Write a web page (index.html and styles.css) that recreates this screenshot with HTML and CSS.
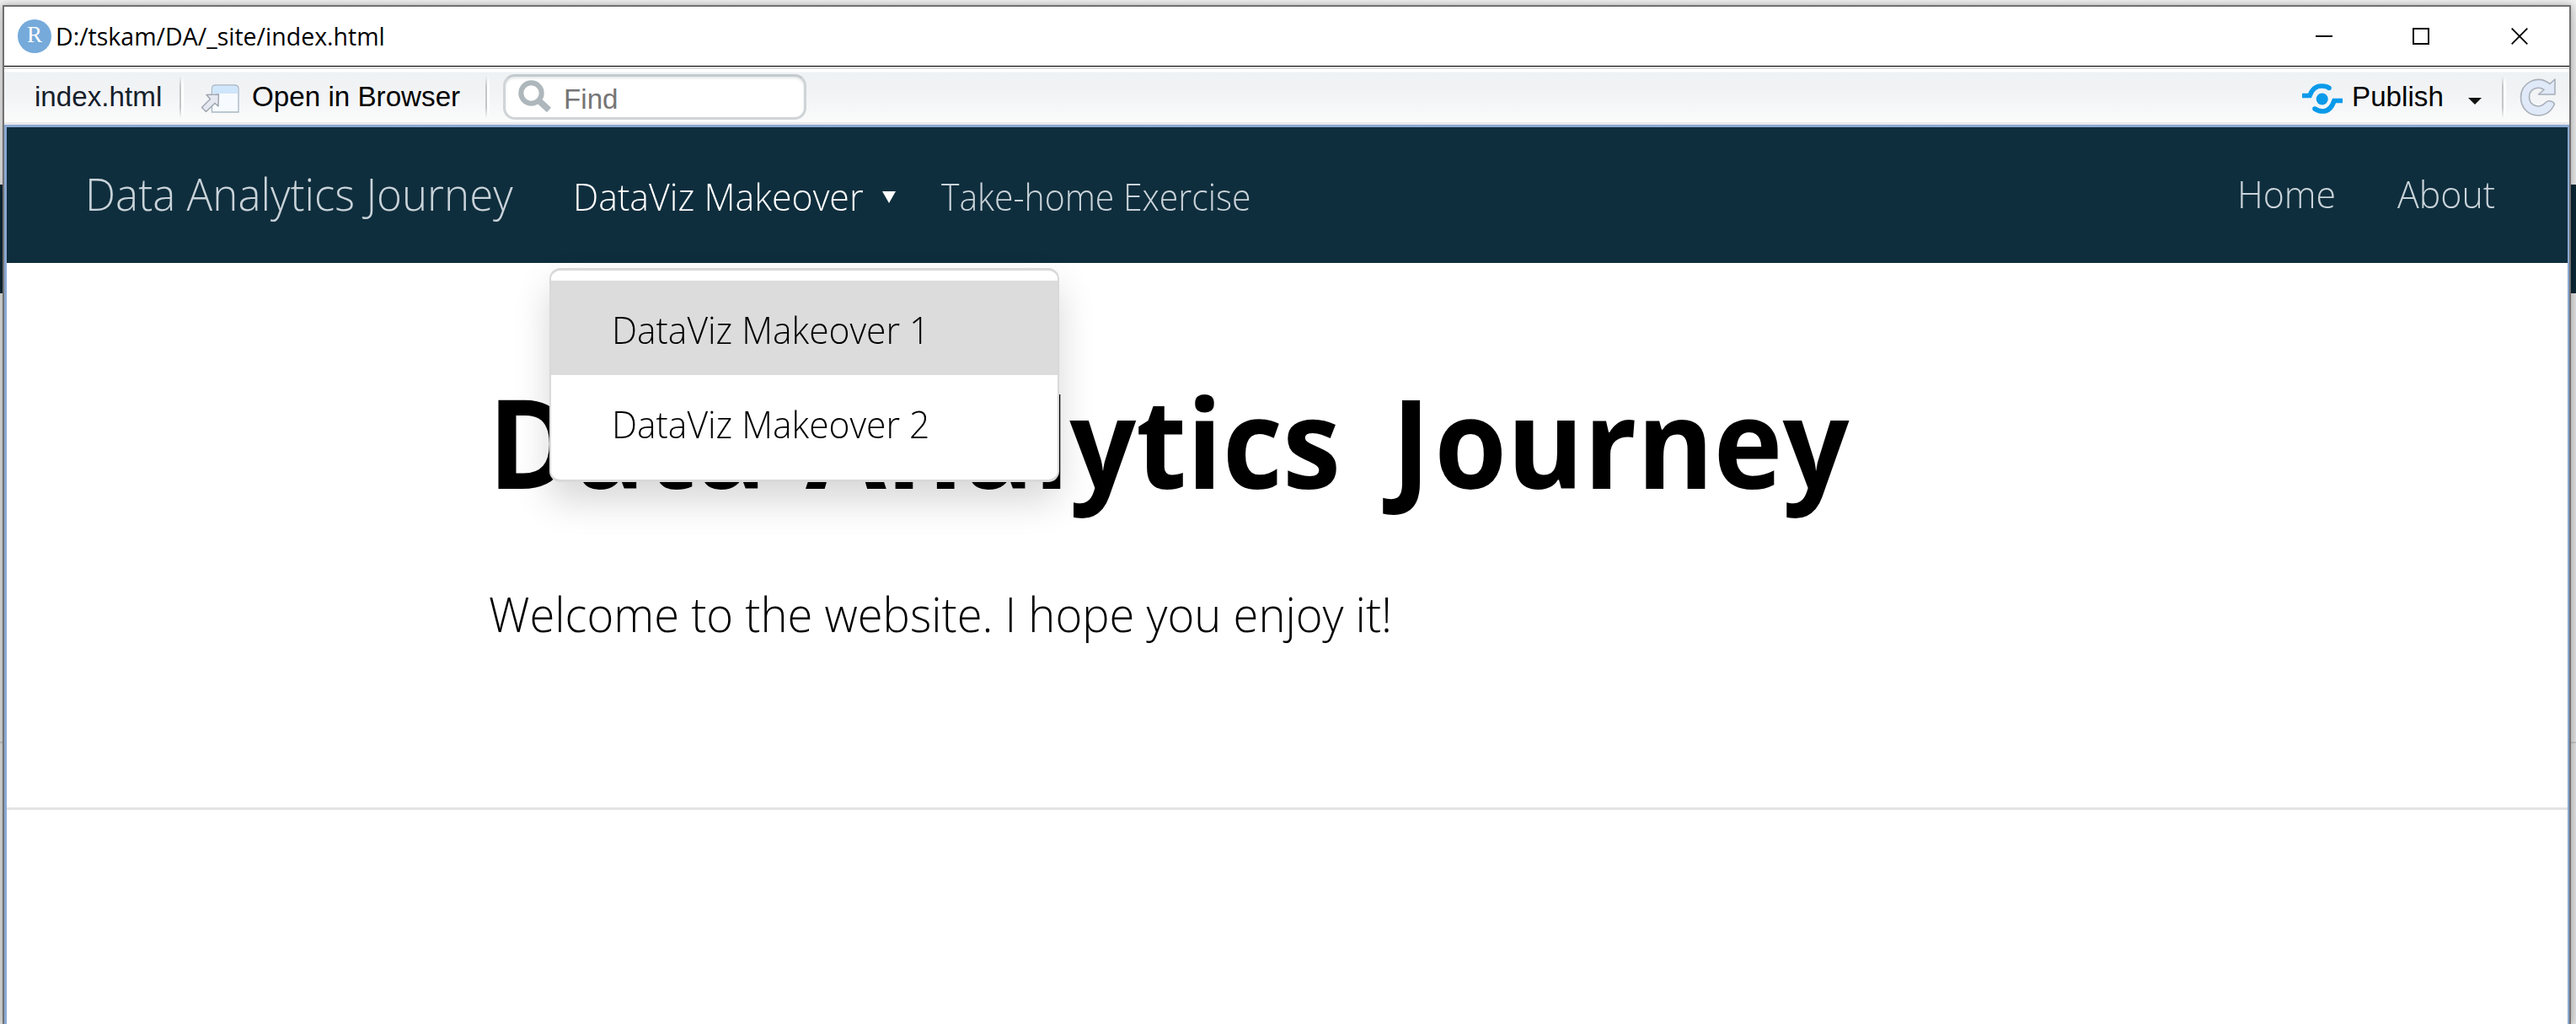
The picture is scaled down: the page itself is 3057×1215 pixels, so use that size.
FILE: index.html
```html
<!DOCTYPE html>
<html lang="en">
<head>
<meta charset="utf-8">
<title>D:/tskam/DA/_site/index.html</title>
<link rel="stylesheet" href="styles.css">
</head>
<body>
<div class="window">
  <header class="titlebar">
    <span class="app-icon">R</span>
    <span class="window-title">D:/tskam/DA/_site/index.html</span>
    <div class="window-controls">
      <svg width="20" height="20" viewBox="0 0 20 20"><path d="M0 10H20" stroke="#000" stroke-width="2"/></svg>
      <svg width="20" height="20" viewBox="0 0 20 20"><rect x="1" y="1" width="18" height="18" fill="none" stroke="#000" stroke-width="2"/></svg>
      <svg width="20" height="20" viewBox="0 0 20 20"><path d="M.7 .7L19.3 19.3M19.3 .7L.7 19.3" stroke="#000" stroke-width="1.8"/></svg>
    </div>
  </header>
  <div class="toolbar">
    <span class="file-name">index.html</span>
    <i class="separator"></i>
    <svg class="open-icon" width="46" height="36" viewBox="0 0 46 36">
      <path d="M13.5 34V6Q13.5 2 18 2H40Q45 2 45 6V34Z" fill="#f7fbff" stroke="#a7b6c4" stroke-width="1.3"/>
      <path d="M14.3 12V6.5Q14.3 2.7 18 2.7H40Q44.3 2.7 44.3 6.5V12Z" fill="#cfe6fb"/>
      <path d="M7 13.5L21.5 13L21 27L17 23.5L6.5 33.5L1.5 28.5L11.5 18.5Z" fill="#e6e8f1" stroke="#9ba4ad" stroke-width="1.4" stroke-linejoin="round"/>
    </svg>
    <span class="open-label">Open in Browser</span>
    <i class="separator"></i>
    <div class="find-box">
      <svg width="40" height="40" viewBox="0 0 40 40"><circle cx="15.5" cy="15.5" r="12.2" fill="none" stroke="#adb7bc" stroke-width="6"/><path d="M23.5 23.5L36.5 35.5" stroke="#adb7bc" stroke-width="7.5"/></svg>
      <span class="find-text">Find</span>
    </div>
    <div class="toolbar-right">
      <svg class="publish-icon" width="48" height="38" viewBox="0 0 48 38">
        <circle cx="23.7" cy="19.5" r="7" fill="#0a9aea"/>
        <path d="M0 15.5H9C11.5 8.5 16 4 23 4C27 4 30 4.700 32 6.500M48 21.500H38C35.500 29 31 34 24.500 34C20.500 34 17.500 33 15 31" fill="none" stroke="#0a9aea" stroke-width="5.600"/>
        <circle cx="32" cy="6.500" r="2.800" fill="#0a9aea"/><circle cx="15" cy="31" r="2.800" fill="#0a9aea"/>
      </svg>
      <span class="publish-label">Publish</span>
      <svg class="publish-caret" width="16" height="8" viewBox="0 0 16 8"><path d="M0 0H16L8 8Z" fill="#111"/></svg>
      <i class="separator"></i>
      <svg class="refresh-icon" width="44" height="48" viewBox="0 0 44 48"><path d="M42 3V21H22.500L29 15.500C22 10.500 11.500 14.500 11.500 24C11.500 34.500 23.500 38.500 30.500 31C34 27 40 29 41.500 32.500C37.500 41.500 31 46 22 46C9.500 46 1.500 36 1.500 24.500C1.500 7 21 -3 36 8.500Z" fill="#dfe9f8" stroke="#a8afb8" stroke-width="1.600" stroke-linejoin="round"/></svg>
    </div>
  </div>
  <div class="page">
    <nav class="navbar">
      <a class="brand">Data Analytics Journey</a>
      <div class="dropdown">
        <a class="dropdown-toggle">DataViz Makeover</a>
        <svg class="dropdown-caret" width="16" height="14" viewBox="0 0 16 14"><path d="M0 0H16L8 14Z" fill="#fff"/></svg>
        <div class="dropdown-menu">
          <a class="menu-item active"><span>DataViz Makeover 1</span></a>
          <a class="menu-item"><span>DataViz Makeover 2</span></a>
        </div>
      </div>
      <a class="nav-link exercise">Take-home Exercise</a>
      <div class="nav-right">
        <a class="nav-link home">Home</a>
        <a class="nav-link about">About</a>
      </div>
    </nav>
    <main class="article">
      <h1>Data <span class="word-two">Analytics</span> <span class="word-three"><span class="initial">J</span>ourney</span></h1>
      <p>Welcome to the website. I hope you enjoy it!</p>
    </main>
  </div>
</div>
</body>
</html>
```
FILE: styles.css
```css
* { box-sizing: border-box; }

body {
  margin: 0;
  height: 1215px;
  padding: 6px 6px 0 3px;
  overflow: hidden;
  background: linear-gradient(#f0f0f0, #e5e5e5 30px 219px, #0b2633 219px 348px, #dedede 348px 880px, #c4c4c4 880px 882px, #dedede 882px);
}

svg, .separator { display: block; flex: none; }

.window {
  display: flex;
  flex-direction: column;
  height: 1209px;
  border: 2px solid #707070;
  border-bottom: 0;
  box-shadow: 0 0 9px rgba(0, 0, 0, .3);
  background: #fff;
}

.titlebar {
  display: flex;
  align-items: center;
  flex: none;
  height: 71px;
  padding: 0 49px 1px 16px;
  border-bottom: 1px solid #000;
}

.app-icon {
  width: 40px;
  height: 40px;
  border-radius: 50%;
  background: #75aadb;
  color: #fff;
  font: 27px/37px "Liberation Serif", serif;
  text-align: center;
}

.window-title {
  margin-left: 5px;
  font: 28.5px/70px "Open Sans", sans-serif;
  white-space: nowrap;
}

.window-controls {
  display: flex;
  gap: 95px;
  margin-left: auto;
}
.window-controls svg:last-child { margin-left: 2px; }

.toolbar {
  display: flex;
  align-items: center;
  flex: none;
  height: 69px;
  border-top: 3px solid #dedede;
  border-bottom: 3px solid #e9e9eb;
  padding: 3px 15px 0 36px;
  background: linear-gradient(#fff 3px, #eff2f4 4px, #f1f3f5 45%, #fbfbfb);
  font: 33.2px/60px "Liberation Sans", Arial, sans-serif;
  white-space: nowrap;
}

.separator {
  width: 5px;
  height: 50px;
  background: linear-gradient(90deg, #c3c6c8 2px, #fff 2px);
  -webkit-mask-image: linear-gradient(transparent, #000 25%, #000 75%, transparent);
  mask-image: linear-gradient(transparent, #000 25%, #000 75%, transparent);
}

.file-name { width: 172px; color: #15202b; }
.open-icon { margin: 4px 15px 0 20px; }
.open-label { width: 277px; }

.find-box {
  display: flex;
  align-items: center;
  width: 360px;
  height: 54px;
  margin-left: 16px;
  padding-left: 15px;
  border: 3px solid #cfd4d7;
  border-top-color: #c3cacf;
  border-radius: 14px;
  background: #fff;
  box-shadow: inset 0 2px 3px #e3e6e8;
}
.find-text { margin-left: 14px; padding-top: 5px; color: #757575; }

.toolbar-right {
  display: flex;
  align-items: center;
  margin-left: auto;
}
.publish-icon { margin-top: 3px; }
.publish-label { width: 138px; margin-left: 11px; }
.publish-caret { margin: 9px 24px 0 0; }
.refresh-icon { margin-left: 16px; }

.page {
  flex: 1;
  border: solid #8aa8d3;
  border-width: 3px 2px 0 3px;
}

.navbar {
  display: flex;
  align-items: center;
  height: 161px;
  padding: 0 84px 0 93px;
  background: #0f2e3d;
  color: #fff;
  font: 300 45px/60px "Open Sans", sans-serif;
  white-space: nowrap;
}
.navbar a { display: block; transform-origin: left; }

.brand {
  width: 508px;
  padding-bottom: 4px;
  color: #c9d3d9;
  font-size: 52.5px;
  transform: scaleX(.973);
}

.dropdown {
  position: relative;
  z-index: 1;
  display: flex;
  align-items: center;
  margin-left: 71px;
  padding-top: 2px;
}
.dropdown-toggle { width: 345px; transform: scaleX(.953); }
.dropdown-caret { margin: 3px 0 0 22px; }

.dropdown-menu {
  position: absolute;
  top: 117px;
  left: -28px;
  width: 605px;
  height: 254px;
  padding-top: 12px;
  border: solid #d9d9db;
  border-width: 3px 2px;
  border-radius: 13px;
  background: #fff;
  box-shadow: 0 22px 44px rgba(0, 0, 0, .16);
}
.menu-item {
  height: 112px;
  padding: 3px 0 0 72px;
  color: #000;
  line-height: 110px;
}
.menu-item.active { background: #dcdcdc; }
.menu-item span { display: block; transform: scaleX(.946); transform-origin: left; }

.nav-link { color: #c9d3d9; }
.exercise { width: 369px; margin-left: 54px; padding-top: 2px; transform: scaleX(.909); }
.nav-right { display: flex; gap: 70px; margin-left: auto; padding-bottom: 4px; }
.home { width: 120px; transform: scaleX(.95); }
.about { width: 118px; transform: scaleX(.953); }

.article {
  height: 649px;
  padding: 111px 0 0 571px;
  border-bottom: 3px solid #e4e4e4;
  color: #000;
  font-family: "Open Sans", sans-serif;
  white-space: nowrap;
}
.article h1 {
  margin: 0;
  font-size: 147px;
  font-weight: 700;
  line-height: 200px;
  transform: scaleX(.944);
  transform-origin: left;
}
.word-two { margin-left: 11px; }
.word-three { margin-left: 26px; }
.initial { margin-right: 5px; }
.article p {
  margin: 65px 0 0 1px;
  font-size: 57px;
  font-weight: 300;
  line-height: 80px;
  transform: scaleX(.953);
  transform-origin: left;
}
```
